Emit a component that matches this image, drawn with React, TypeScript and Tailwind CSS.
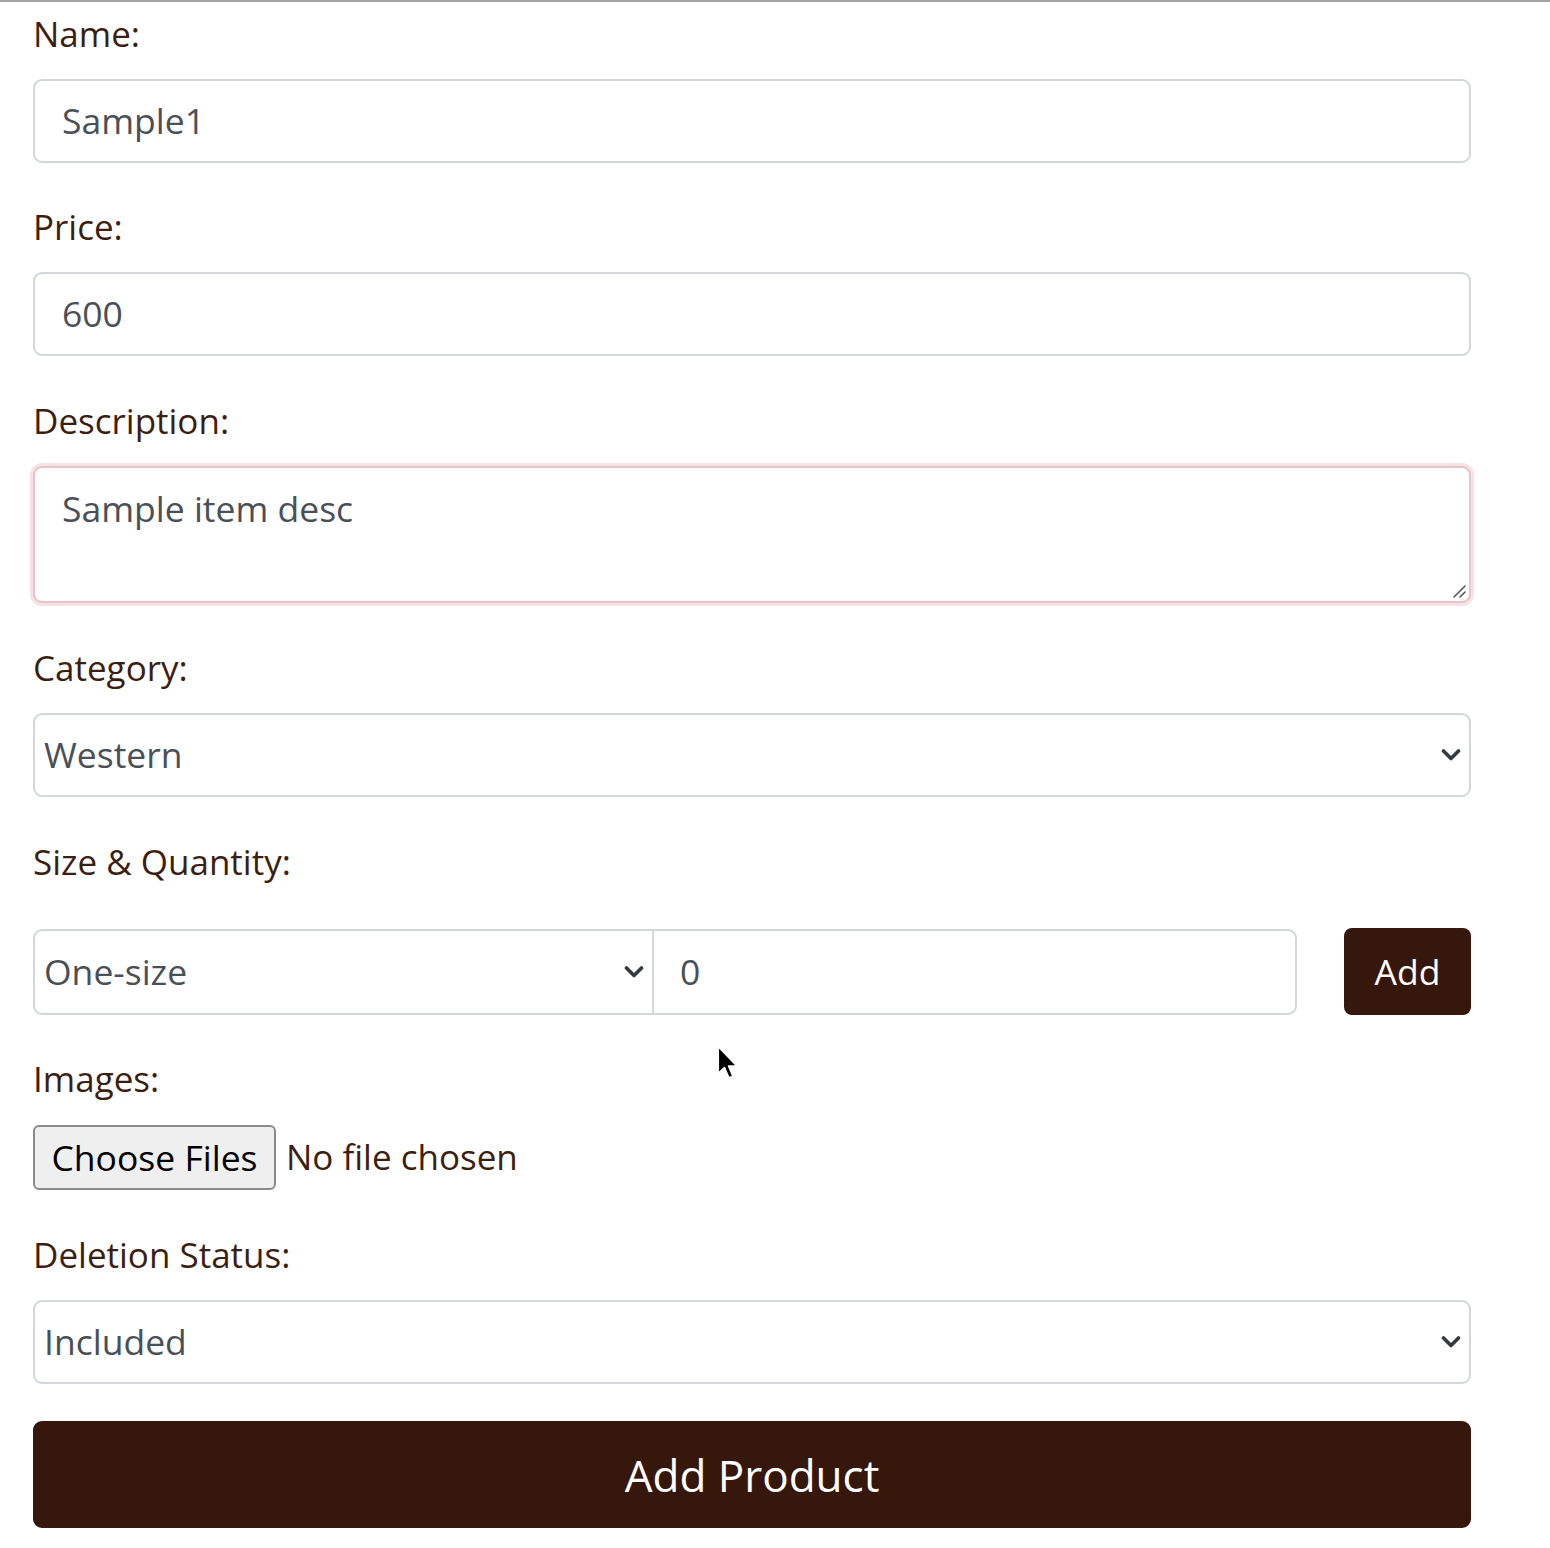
import React from "react";

const font = { fontFamily: '"Open Sans", "Noto Sans", Arial, sans-serif' };

function Label({ children, mb = "mb-[18px]" }: { children: React.ReactNode; mb?: string }) {
  return (
    <div className={`h-[54px] text-[35px] leading-[54px] text-[#3b1f12] ${mb}`}>{children}</div>
  );
}

function Chevron() {
  return (
    <svg width="20" height="13" viewBox="0 0 20 13" className="block">
      <path d="M2.5 2.5 L10 10 L17.5 2.5" fill="none" stroke="#343a40" strokeWidth="3.6" strokeLinecap="round" strokeLinejoin="round" />
    </svg>
  );
}

function TextInput({ value }: { value: string }) {
  return (
    <div className="h-[84px] rounded-[9px] border-2 border-[#d3d7db] bg-white pl-[27px] flex items-center text-[35.5px] text-[#495057]">
      {value}
    </div>
  );
}

function Select({ value }: { value: string }) {
  return (
    <div className="relative h-[84px] rounded-[9px] border-2 border-[#d3d7db] bg-white pl-[9px] flex items-center text-[35.5px] text-[#495057]">
      {value}
      <div className="absolute right-[8px] top-1/2 -translate-y-1/2">
        <Chevron />
      </div>
    </div>
  );
}

export default function App() {
  return (
    <div className="relative min-h-[1548px] w-[1550px] bg-white border-t-2 border-[#a3a3a3]" style={font}>
      <div className="ml-[33px] w-[1438px] pt-[5px] flex flex-col">
        <Label>Name:</Label>
        <TextInput value="Sample1" />
        <div className="h-[37px]" />
        <Label>Price:</Label>
        <TextInput value="600" />
        <div className="h-[38px]" />
        <Label>Description:</Label>
        <div className="relative h-[137px] rounded-[9px] border-2 border-[#e8c3c8] shadow-[0_0_0_3px_#f6e2e4] bg-white pl-[27px] pt-[13px] text-[35.5px] leading-[54px] text-[#495057]">
          Sample item desc
          <svg width="14" height="14" viewBox="0 0 14 14" className="absolute right-[3px] bottom-[3px]">
            <path d="M2 13 L13 2 M8 13 L13 8" stroke="#555" strokeWidth="1.6" strokeLinecap="round" />
          </svg>
        </div>
        <div className="h-[38px]" />
        <Label>Category:</Label>
        <Select value="Western" />
        <div className="h-[38px]" />
        <Label mb="mb-[39px]">Size &amp; Quantity:</Label>
        <div className="flex items-center">
          <div className="relative h-[86px] w-[621px] rounded-l-[9px] border-2 border-[#d3d7db] bg-white pl-[9px] flex items-center text-[35.5px] text-[#495057]">
            One-size
            <div className="absolute right-[8px] top-1/2 -translate-y-1/2">
              <Chevron />
            </div>
          </div>
          <div className="h-[86px] w-[645px] -ml-[2px] rounded-r-[9px] border-2 border-[#d3d7db] bg-white pl-[26px] flex items-center text-[35.5px] text-[#495057]">
            0
          </div>
          <div className="ml-auto h-[87px] w-[127px] rounded-[8px] bg-[#36170b] flex items-center justify-center text-[35.5px] text-white">
            Add
          </div>
        </div>
        <div className="h-[37px]" />
        <Label mb="mb-[19px]">Images:</Label>
        <div className="flex items-center h-[65px]">
          <div className="h-[65px] w-[243px] rounded-[6px] border-2 border-[#8a8a8a] bg-[#efefef] flex items-center justify-center text-[35.5px] text-black">
            Choose Files
          </div>
          <div className="ml-[10px] text-[35px] text-[#3b1f12]">No file chosen</div>
        </div>
        <div className="h-[38px]" />
        <Label>Deletion Status:</Label>
        <Select value="Included" />
        <div className="h-[37px]" />
        <div className="h-[107px] rounded-[9px] bg-[#36170b] flex items-center justify-center text-[44px] text-white">
          Add Product
        </div>
      </div>
      <svg width="22" height="36" viewBox="0 0 17 27" className="absolute left-[717px] top-[1043px]">
        <path d="M1 1 L1 21.5 L5.8 17 L9.2 25 L12.2 23.6 L8.9 15.8 L15.3 15.8 Z" fill="#000" stroke="#fff" strokeWidth="1.2" strokeLinejoin="round" />
      </svg>
    </div>
  );
}
